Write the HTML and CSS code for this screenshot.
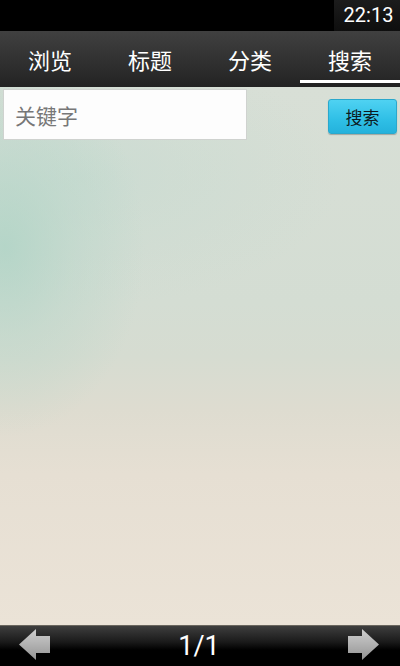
FILE: index.html
```html
<!DOCTYPE html>
<html lang="zh-CN">
<head>
<meta charset="utf-8">
<link rel="stylesheet" href="styles.css">
</head>
<body>
<div class="screen">
  <div class="status">
    <div class="time">22:13</div>
  </div>
  <div class="tabs">
    <div class="tab">浏览</div>
    <div class="tab">标题</div>
    <div class="tab">分类</div>
    <div class="tab active">搜索</div>
  </div>
  <div class="content">
    <div class="search-row">
      <input class="keyword" type="text" placeholder="关键字">
      <button class="search-btn">搜索</button>
    </div>
  </div>
  <div class="pager">
    <svg class="arrow" width="32" height="31" viewBox="0 0 32 31">
      <defs>
        <linearGradient id="ag" x1="0" y1="0" x2="0" y2="1">
          <stop offset="0" stop-color="#cfcfcf"/>
          <stop offset="1" stop-color="#939393"/>
        </linearGradient>
      </defs>
      <polygon points="1,15.5 18,0 18,7 32,7 32,24 18,24 18,31" fill="url(#ag)"/>
    </svg>
    <div class="page-num">1/1</div>
    <svg class="arrow" width="32" height="31" viewBox="0 0 32 31">
      <defs>
        <linearGradient id="ag2" x1="0" y1="0" x2="0" y2="1">
          <stop offset="0" stop-color="#cfcfcf"/>
          <stop offset="1" stop-color="#939393"/>
        </linearGradient>
      </defs>
      <polygon points="31,15.5 14,0 14,7 0,7 0,24 14,24 14,31" fill="url(#ag2)"/>
    </svg>
  </div>
</div>
</body>
</html>
```

FILE: styles.css
```css
* { box-sizing: border-box; }
html, body { margin: 0; padding: 0; }
body {
  width: 400px;
  height: 666px;
  overflow: hidden;
  font-family: "Noto Sans CJK SC", Roboto, sans-serif;
}
.screen {
  width: 400px;
  height: 666px;
  display: flex;
  flex-direction: column;
}
.status {
  height: 31px;
  background: #000;
  display: flex;
  justify-content: flex-end;
}
.time {
  width: 66px;
  height: 31px;
  background: linear-gradient(#1c1c1c, #0e0e0e);
  color: #fff;
  font-family: Roboto, "Liberation Sans", sans-serif;
  font-size: 20px;
  line-height: 31px;
  text-align: center;
  padding-left: 3px;
}
.tabs {
  height: 56px;
  background: linear-gradient(#404040, #2c2c2c 70%, #222);
  display: grid;
  grid-template-columns: repeat(4, 1fr);
  padding-bottom: 4px;
}
.tab {
  height: 52px;
  border-bottom: 3px solid transparent;
  color: #fff;
  font-size: 22px;
  line-height: 30px;
  padding-top: 13px;
  text-align: center;
}
.tab.active {
  border-bottom-color: #fff;
}
.content {
  flex: 1;
  padding: 2px 3px 0 3px;
  background:
    radial-gradient(ellipse 140px 190px at 5px 160px, rgba(176, 212, 198, 0.85), rgba(176, 212, 198, 0.35) 50%, rgba(176, 212, 198, 0)),
    radial-gradient(ellipse 260px 130px at 80px 90px, rgba(196, 218, 208, 0.6), rgba(196, 218, 208, 0)),
    linear-gradient(#d8dfd6 0%, #d4ddd3 40%, #d6dcd1 50%, #dedcd0 60%, #e6dfd3 72%, #ebe3d7 100%);
}
.search-row {
  display: flex;
  justify-content: space-between;
  align-items: flex-start;
}
.keyword {
  width: 244px;
  height: 51px;
  margin: 0;
  border: 1px solid #cfd2cf;
  background: #fdfdfd;
  padding: 0 11px;
  font-family: "Noto Sans CJK SC", sans-serif;
  font-size: 21px;
  color: #333;
  outline: none;
}
.keyword::placeholder {
  color: #777;
}
.search-btn {
  width: 69px;
  height: 35px;
  margin-top: 10px;
  border: 1px solid #2aa8cc;
  border-radius: 3px;
  background: linear-gradient(#4fd2f2, #2fbfe6 60%, #24b2dc);
  color: #0c1a22;
  font-family: "Noto Sans CJK SC", sans-serif;
  font-size: 17px;
  padding: 0;
  box-shadow: 0 1px 1px rgba(0,0,0,0.25);
}
.pager {
  height: 41px;
  border-top: 1px solid #6a665e;
  background: linear-gradient(#3e3e3e, #1a1a1a 40%, #000 60%, #000);
  display: flex;
  justify-content: space-between;
  align-items: center;
  padding: 0 20px 4px 18px;
}
.arrow { display: block; }
.page-num {
  color: #fff;
  font-family: Roboto, "Liberation Sans", sans-serif;
  font-size: 27px;
  line-height: 30px;
  padding-top: 4px;
}
```
